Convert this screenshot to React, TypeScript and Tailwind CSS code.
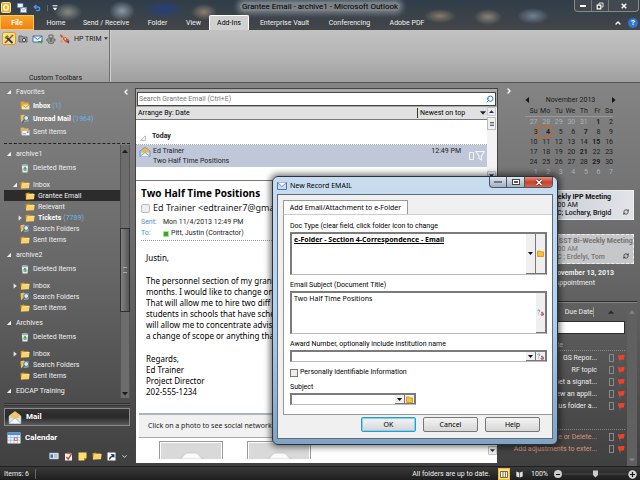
import { Check, ChevronDown, ChevronLeft, ChevronRight, ChevronUp, RefreshCw, Search, Undo2 } from "lucide-react";
import type { ReactNode } from "react";

type IconKind = "folder" | "inbox" | "search" | "sent" | "trash";

type FolderItem = {
  label: string;
  icon: IconKind;
  count?: string;
  bold?: boolean;
  nested?: boolean;
  selected?: boolean;
  arrow?: "open" | "closed";
};

type FolderGroup = {
  name: string;
  items: FolderItem[];
};

const ribbonTabs = [
  { label: "Home", width: "w-[38px]" },
  { label: "Send / Receive", width: "w-[62px]" },
  { label: "Folder", width: "w-[41px]" },
  { label: "View", width: "w-[31px]" },
  { label: "Add-Ins", width: "w-10", active: true },
  { label: "Enterprise Vault", width: "w-[71px]" },
  { label: "Conferencing", width: "w-[59px]" },
  { label: "Adobe PDF", width: "w-[56px]" },
];

const favorites: FolderItem[] = [
  { label: "Inbox", icon: "inbox", count: "(1)", bold: true },
  { label: "Unread Mail", icon: "search", count: "(1964)", bold: true },
  { label: "Sent Items", icon: "sent" },
];

const folderGroups: FolderGroup[] = [
  {
    name: "archive1",
    items: [
      { label: "Inbox", icon: "folder", arrow: "open" },
      { label: "Grantee Email", icon: "folder", nested: true, selected: true },
      { label: "Relevant", icon: "folder", nested: true },
      { label: "Tickets", icon: "folder", nested: true, count: "(7789)", bold: true, arrow: "closed" },
      { label: "Search Folders", icon: "search" },
      { label: "Sent Items", icon: "folder" },
    ],
  },
  {
    name: "archive2",
    items: [
      { label: "Inbox", icon: "folder", arrow: "closed" },
      { label: "Search Folders", icon: "search" },
      { label: "Sent Items", icon: "folder" },
    ],
  },
  {
    name: "Archives",
    items: [
      { label: "Inbox", icon: "folder", arrow: "closed" },
      { label: "Search Folders", icon: "search" },
      { label: "Sent Items", icon: "folder" },
    ],
  },
];

const bodyLines = [
  "The personnel section of my grant",
  "months. I would like to change one",
  "That will allow me to hire two diff",
  "students in schools that have sche",
  "will allow me to concentrate advis",
  "a change of scope or anything that",
];

const weekdays = ["Su", "Mo", "Tu", "We", "Th", "Fr", "Sa"];

const weeks = [
  [27, 28, 29, 30, 31, 1, 2],
  [3, 4, 5, 6, 7, 8, 9],
  [10, 11, 12, 13, 14, 15, 16],
  [17, 18, 19, 20, 21, 22, 23],
  [24, 25, 26, 27, 28, 29, 30],
  [1, 2, 3, 4, 5, 6, 7],
];

const busyDays = [1, 4, 7, 15, 21, 29];

const tasks = ["GS Repor...", "RF topic", "Get a signat...", "Review an appli...", "Status folder a..."];

const lateTasks = ["Move or Delete...", "Add adjustments to exter..."];

function FolderIcon() {
  return (
    <svg viewBox="0 0 10 8" className="h-2 w-2.5 shrink-0">
      <path d="M.5 1.2 4 .6l.8 1 3.7-.3v5.5L1 7.6z" fill="#d99a22" />
      <path d="M2 2.6 9.6 2 9 7.2.8 7.6z" fill="#fbd36b" />
      <path d="M2.2 3 9.2 2.5" stroke="#fff0b5" strokeWidth=".7" />
    </svg>
  );
}

function TreeIcon({ kind }: { kind: IconKind }) {
  if (kind === "trash") {
    return (
      <svg viewBox="0 0 10 10" className="h-2.5 w-2.5 shrink-0">
        <path d="M1.8 2.2h6.4L7.5 9.4h-5z" fill="#e4ebee" />
        <ellipse cx="5" cy="2.2" rx="3.2" ry="1.1" fill="#9fb0b8" />
        <path d="m5 4 1.5 2.2H3.5zM3.6 7.4h3" stroke="#2c9a4a" fill="#49b862" strokeWidth=".7" />
      </svg>
    );
  }
  if (kind === "search") {
    return (
      <svg viewBox="0 0 10 9" className="h-[9px] w-2.5 shrink-0">
        <path d="M.5 1.2 4 .6l.8 1 3.7-.3v6L1 8z" fill="#f2bd4b" />
        <circle cx="6.2" cy="4" r="2.4" fill="#d9efff" stroke="#3579c6" />
        <path d="m4.5 5.8-2.3 2.6" stroke="#2862a8" strokeWidth="1.3" />
      </svg>
    );
  }
  if (kind === "inbox") {
    return (
      <svg viewBox="0 0 10 9" className="h-[9px] w-2.5 shrink-0">
        <path d="M.5.8 4 .5l.8 1 3.7-.3v6L1 8z" fill="#e6a52e" />
        <path d="M2 3.6h7.4v4.8H2z" fill="#fbe3a0" />
        <path d="m2 3.6 3.7 2.8 3.7-2.8" fill="none" stroke="#b98623" strokeWidth=".7" />
      </svg>
    );
  }
  if (kind === "sent") {
    return (
      <svg viewBox="0 0 10 9" className="h-[9px] w-2.5 shrink-0">
        <path d="M.5.8 4 .5l.8 1 3.7-.3v6L1 8z" fill="#eab34a" />
        <path d="M2 3.4h7.6v5H2z" fill="#f1f6fc" stroke="#7f9cc0" strokeWidth=".5" />
        <path d="M6.8 4.4h1.8v1.5H6.8z" fill="#d2504a" />
        <path d="M3 6.7h3" stroke="#5b82b8" strokeWidth=".7" />
      </svg>
    );
  }
  return <FolderIcon />;
}

function Caret({ state }: { state?: "open" | "closed" }) {
  return (
    <svg viewBox="0 0 6 6" className="mr-0.5 h-1.5 w-1.5 shrink-0">
      {state === "open" && <path d="M5 .8V5H.8z" fill="#f1f1f1" />}
      {state === "closed" && <path d="M1.6.4 4.8 3 1.6 5.6z" fill="#e8e8e8" />}
    </svg>
  );
}

function FolderRow({ item, tall }: { item: FolderItem; tall?: boolean }) {
  return (
    <button
      type="button"
      className={`flex w-full items-center text-left ${tall ? "h-[13px]" : "h-[11px]"} ${
        item.nested ? "pl-[13px]" : "pl-2"
      } ${item.selected ? "bg-[#2d2c2d]" : ""}`}
    >
      <Caret state={item.arrow} />
      <TreeIcon kind={item.icon} />
      <span className={`ml-[3px] whitespace-nowrap ${item.bold ? "font-bold text-white" : ""}`}>{item.label}</span>
      {item.count && <span className="ml-0.5 text-[#6cb6ea]">{item.count}</span>}
    </button>
  );
}

function GroupHeader({ name }: { name: string }) {
  return (
    <button type="button" className="flex h-3.5 w-full items-center gap-0.5 pl-0.5 text-left">
      <Caret state="open" />
      {name}
    </button>
  );
}

function FolderPane() {
  return (
    <nav className="flex w-[130px] shrink-0 flex-col pb-0.5 pl-1 text-[#f0f0f0]">
      <div className="flex items-center justify-between pt-0.5">
        <GroupHeader name="Favorites" />
        <ChevronLeft className="h-2 w-2 shrink-0 text-white" strokeWidth={4} />
      </div>
      {favorites.map((item) => (
        <FolderRow key={item.label} item={item} tall />
      ))}
      <div className="mt-[5px] border-t border-dashed border-[#222]" />
      <div className="mt-px flex grow">
        <div className="min-w-0 grow pt-0.5">
          {folderGroups.map((group) => (
            <section key={group.name} className="mb-[3px]">
              <GroupHeader name={group.name} />
              <div className="mb-1 flex h-3.5 items-center">
                <FolderRow item={{ label: "Deleted Items", icon: "trash" }} />
              </div>
              {group.items.map((item) => (
                <FolderRow key={item.label} item={item} />
              ))}
            </section>
          ))}
          <GroupHeader name="EDCAP Training" />
        </div>
        <div className="flex w-2.5 shrink-0 flex-col items-center border-x border-[#555] bg-[#6c6c6c]">
          <svg viewBox="0 0 8 4" className="my-1 h-1 w-2">
            <path d="M1 4 4 .5 7 4z" fill="#1b1b1b" />
          </svg>
          <div className="mt-[71px] grid h-[84px] w-2.5 place-items-center border border-[#303030] bg-linear-to-r from-[#828282] to-[#565656]">
            <div className="h-1.5 w-1 border-y border-[#aaa]" />
          </div>
          <svg viewBox="0 0 8 4" className="mb-0.5 mt-auto h-1 w-2">
            <path d="M1 0 4 3.5 7 0z" fill="#1b1b1b" />
          </svg>
        </div>
      </div>

      <div className="mt-[5px] h-[3px] border-y border-[#303030] bg-[#606060]" />
      <button
        type="button"
        className="mt-0.5 flex h-[18px] items-center gap-1 border border-[#8a8a8a] bg-linear-to-b from-[#343434] via-[#292929] to-[#5b5b5b] pl-[3px] text-[8px] font-bold text-white"
      >
        <svg viewBox="0 0 14 13" className="h-[13px] w-3.5">
          <path d="m1 5 6-4.5L13 5v7.4H1z" fill="#dcebf8" stroke="#8fb0d2" strokeWidth=".6" />
          <path d="M2.6 3.4 7 .8l4.4 2.6v3.8H2.6z" fill="#f7c558" />
          <path d="m1 12.4 6-5.6 6 5.6" fill="#fff" stroke="#7fa3ca" strokeWidth=".7" />
        </svg>
        Mail
      </button>
      <button type="button" className="mt-0.5 flex h-5 items-center gap-1 pl-[3px] text-[8px] font-bold text-white">
        <svg viewBox="0 0 14 12" className="h-3 w-3.5">
          <path d="M.5.5h13v11H.5z" fill="#eef5fd" />
          <path d="M.5.5h13v2.6H.5z" fill="#4c8fdc" />
          <path d="M.5 5.5h13M.5 8.3h13M3.7 3v8.5M7 3v8.5M10.4 3v8.5" stroke="#92b8df" strokeWidth=".7" />
          <path d="M7.4 5.8h2.8v2.6H7.4z" fill="#fff" stroke="#e25a33" strokeWidth=".9" />
        </svg>
        Calendar
      </button>
      <div className="flex h-4 items-center justify-end gap-[5px] pr-0.5">
        <svg viewBox="0 0 10 8" className="h-2 w-2.5">
          <path d="M.5 1h9v6h-9z" fill="#e8f0fa" stroke="#8ab" strokeWidth=".6" />
          <path d="M1.5 2.4h2.6v3.4H1.5z" fill="#3570b4" />
          <path d="M5.3 3h3M5.3 5h3" stroke="#567" strokeWidth=".7" />
        </svg>
        <svg viewBox="0 0 9 9" className="h-[9px] w-[9px]">
          <path d="M1 1.5h7v7H1z" fill="#f2f2f2" />
          <path d="m2.4 5 1.8 2.2L7.6 1.6" fill="none" stroke="#c63b2c" strokeWidth="1.3" />
          <path d="M3 .5h3v1.6H3z" fill="#a0683c" />
        </svg>
        <svg viewBox="0 0 9 9" className="h-[9px] w-[9px]">
          <path d="M.5.5h8v5.6L6 8.5H.5z" fill="#ffdf6a" />
          <path d="M8.5 6.1H6v2.4z" fill="#b98f21" />
        </svg>
        <FolderIcon />
        <svg viewBox="0 0 9 9" className="h-[9px] w-[9px]">
          <path d="M.5.5h8v8h-8z" fill="#fff" />
          <path d="M2 7.6C2 5 3.2 4.2 5 4L3.8 2.2h3.6v3.6L6 4.9C4.4 5.2 3.4 6 3.2 7.6z" fill="#1c2f4d" />
        </svg>
        <ChevronDown className="h-[7px] w-[7px]" strokeWidth={3} />
      </div>
    </nav>
  );
}

function TitleBar() {
  return (
    <header className="bg-[#3f464d] bg-[radial-gradient(ellipse_14px_9px_at_68px_12px,#858b85,transparent),radial-gradient(ellipse_13px_10px_at_122px_11px,#8999a5,transparent),radial-gradient(ellipse_20px_9px_at_164px_9px,#253f80,transparent),radial-gradient(ellipse_13px_8px_at_204px_12px,#8d8071,transparent),radial-gradient(ellipse_16px_7px_at_440px_16px,#887a65,transparent),radial-gradient(ellipse_14px_8px_at_488px_17px,#878373,transparent),radial-gradient(ellipse_16px_8px_at_533px_16px,#6f8194,transparent),linear-gradient(#303d49,#444649)]">
      <div className="flex h-[15px] items-start">
        <div className="flex h-[15px] w-[200px] items-center gap-1.5 pl-px text-white">
          <svg viewBox="0 0 10 11" className="h-[11px] w-2.5">
            <rect x=".5" y=".5" width="9" height="10" rx="1" fill="#f3b223" stroke="#ffe597" />
            <ellipse cx="5" cy="5.5" rx="2.2" ry="2.6" fill="none" stroke="#fff" strokeWidth="1.4" />
          </svg>
          <button type="button" aria-label="Send/Receive All Folders">
            <svg viewBox="0 0 10 10" className="h-2.5 w-2.5">
              <path d="M.5.5H6v4H.5zM3.5 4.5h6v5h-6z" fill="#eff5fc" stroke="#6590c5" strokeWidth=".7" />
              <path d="m3.5 4.5 3 2.6 3-2.6" fill="none" stroke="#6590c5" strokeWidth=".7" />
            </svg>
          </button>
          <button type="button" aria-label="Undo">
            <Undo2 className="h-2 w-2 text-[#4f94ed]" strokeWidth={4} />
          </button>
          <button type="button" aria-label="Customize toolbar" className="border-l border-[#666] pl-1">
            <svg viewBox="0 0 6 6" className="h-1.5 w-1.5">
              <path d="M.5.8h5" stroke="#fff" />
              <path d="M.8 2.8h4.4L3 5.4z" fill="#fff" />
            </svg>
          </button>
        </div>
        <h1 className="grow text-center text-[8px] leading-[14px] text-black">
          <span className="rounded-full bg-white/35 px-0.5 shadow-[0_0_5px_3px_rgb(255_255_255/0.3)]">
            Grantee Email - archive1 - Microsoft Outlook
          </span>
        </h1>
        <div className="flex w-[200px] justify-end pr-px">
          <div className="flex h-3 divide-x divide-[#777] rounded-b-sm border border-t-0 border-[#888] bg-[#414850]">
            <button type="button" aria-label="Minimize" className="grid w-[17px] place-items-center">
              <span className="h-0.5 w-1.5 bg-white" />
            </button>
            <button type="button" aria-label="Restore" className="grid w-[17px] place-items-center">
              <svg viewBox="0 0 8 8" className="h-2 w-2">
                <path d="M3 3V1h4v4H5.4" fill="none" stroke="#ddd" />
                <path d="M1.2 3.2h3.6v3.6H1.2z" fill="none" stroke="#fff" strokeWidth="1.2" />
              </svg>
            </button>
            <button type="button" aria-label="Close" className="grid w-[29px] place-items-center">
              <svg viewBox="0 0 6 6" className="h-1.5 w-1.5">
                <path d="m.7.7 4.6 4.6m0-4.6L.7 5.3" stroke="#fff" strokeWidth="1.5" />
              </svg>
            </button>
          </div>
        </div>
      </div>
      <div className="flex h-[15px] items-stretch text-[#f0f0f0]">
        <button
          type="button"
          className="mr-[3px] w-[34px] border border-[#f8c45c] bg-linear-to-b from-[#f3a529] to-[#f57f11] font-bold text-white"
        >
          File
        </button>
        {ribbonTabs.map((tab) => (
          <button
            key={tab.label}
            type="button"
            className={`whitespace-nowrap ${tab.width} ${
              tab.active ? "rounded-t-xs border border-b-0 border-white bg-[#d0d0d0] text-black" : ""
            }`}
          >
            {tab.label}
          </button>
        ))}
        <div className="ml-auto flex items-center gap-1.5 pr-0.5">
          <ChevronUp className="h-2 w-2 text-white" strokeWidth={4} />
          <button type="button" aria-label="Help" className="grid h-2.5 w-2.5 place-items-center rounded-full bg-[#2f75d4] text-[8px] font-bold text-white">
            ?
          </button>
        </div>
      </div>
    </header>
  );
}

function Ribbon() {
  return (
    <div className="flex h-[53px] border-b border-[#555] bg-linear-to-b from-[#c2c2c2] via-[#b5b5b5] to-[#9f9f9f] text-[#1a1a1a]">
      <div className="flex w-[110px] flex-col justify-between border-r border-[#707070] pl-0.5 pt-0.5 shadow-[1px_0_0_#d0d0d0]">
        <div className="flex items-center gap-0.5">
          <button type="button" aria-label="Contacts tool" className="grid h-[13px] w-3.5 place-items-center rounded-xs border border-[#d99b2e] bg-[#ffdf83]">
            <svg viewBox="0 0 10 10" className="h-2.5 w-2.5">
              <path d="m1 9 8-8" stroke="#c33b2e" strokeWidth="1.6" />
              <path d="m2 3 6.5 6" stroke="#20366f" strokeWidth="1.8" />
              <path d="M.5 3.6 3.4 1 5 3 2 5z" fill="#2ea02e" />
            </svg>
          </button>
          <svg viewBox="0 0 10 10" className="h-2.5 w-2.5">
            <path d="M1 2h3l1 1h4v5H1z" fill="#999" stroke="#666" />
            <circle cx="6" cy="6" r="1.7" fill="#ccc" stroke="#555" />
          </svg>
          <svg viewBox="0 0 11 10" className="ml-0.5 h-2.5 w-[11px]">
            <path d="M1 2h9v6H1z" fill="#eef5ff" stroke="#3f70b6" />
            <path d="m1 2 4.5 3.5L10 2" fill="none" stroke="#3f70b6" />
            <path d="M6 7h3V5.4L11 7.7 9 10V8.6H6z" fill="#36a342" />
          </svg>
          <svg viewBox="0 0 10 10" className="ml-px h-2.5 w-2.5">
            <path d="M3 1h4v3H3zM1 5h8v2H1z" fill="#bbb" stroke="#666" />
            <path d="M5 4v4M2 8.5c1 1 5 1 6 0" fill="none" stroke="#555" />
          </svg>
          <svg viewBox="0 0 11 11" className="ml-px h-[11px] w-[11px]">
            <path d="m1 1 3 2-2 2z" fill="#d5452e" />
            <path d="m2.4 2.4 7 3.6.8 4-4-.8z" fill="#e8542f" />
            <path d="m4 3 5 2-3 3z" fill="#f6c33e" />
            <circle cx="6.2" cy="6" r="1.4" fill="#fff3c0" stroke="#a8321e" strokeWidth=".8" />
            <path d="m7.4 8.4 3-1.2-.4 3.4z" fill="#6f2fa0" />
            <path d="m1.4 7 2.4 1-2 2z" fill="#f48b24" />
          </svg>
          <button type="button" className="ml-0.5 flex items-center gap-0.5 whitespace-nowrap">
            HP TRIM
            <svg viewBox="0 0 4 3" className="h-[3px] w-1">
              <path d="M0 .3h4L2 2.8z" fill="#333" />
            </svg>
          </button>
        </div>
        <div className="text-center leading-[8px]">Custom Toolbars</div>
      </div>
    </div>
  );
}

function ScrollArrow({ up }: { up?: boolean }) {
  return (
    <svg viewBox="0 0 9 9" className="h-[9px] w-[9px] shrink-0">
      <path d="M.5.5h8v8h-8z" fill="#e9ebee" stroke="#c2c6cb" />
      {up ? <path d="M2 6 4.5 3.2 7 6z" fill="#243047" /> : <path d="M2 3.2 4.5 6 7 3.2z" fill="#243047" />}
    </svg>
  );
}

function Photo() {
  return (
    <div className="h-[18px] w-16 border border-b-0 border-[#999] bg-white px-px pt-px">
      <svg viewBox="0 0 60 16" preserveAspectRatio="xMidYMax slice" className="h-full w-full">
        <path d="M0 0h60v16H0z" fill="#d9d9d9" />
        <path d="M19 16c3-1 4-6 8-6h7c4 0 5 5 8 6z" fill="#fafafa" stroke="#bbb" strokeWidth=".6" />
      </svg>
    </div>
  );
}

function MailPane() {
  return (
    <main className="mx-[5px] mb-0.5 mt-[5px] flex min-w-0 grow flex-col border border-[#444] bg-white text-[#222]">
      <div className="bg-[#a9a9a9] p-px pt-[3px]">
        <div className="flex h-3.5 items-center border border-[#444] bg-white px-px">
          <input aria-label="Search Grantee Email" placeholder="Search Grantee Email (Ctrl+E)" className="min-w-0 grow outline-none placeholder:text-[#777]" />
          <Search className="h-2 w-2 -scale-x-100 text-[#2c74c9]" strokeWidth={3} />
        </div>
      </div>
      <div className="flex h-[73px]">
        <div className="min-w-0 grow">
          <div className="flex h-[13px] items-center justify-between border-b border-[#777] bg-[#e1e1e1] pl-0.5 text-black">
            <button type="button">Arrange By: Date</button>
            <button type="button" className="flex w-[70px] items-center justify-between border-l border-[#333] pl-0.5 pr-px">
              Newest on top
              <svg viewBox="0 0 6 4" className="h-1 w-1.5">
                <path d="M0 .3h6L3 3.8z" fill="#222" />
              </svg>
            </button>
          </div>
          <div className="flex h-[25px] items-end gap-1.5 border-b border-dotted border-[#aaa] pb-[3px] pl-1 font-bold leading-[9px]">
            <svg viewBox="0 0 6 6" className="h-1.5 w-1.5">
              <path d="M5.4.8v4.6H.8z" fill="none" stroke="#aaa" strokeWidth=".8" />
            </svg>
            Today
          </div>
          <button type="button" className="flex h-[22px] w-full items-start bg-[#c0c7d8] pl-[3px] pt-px text-left leading-2.5">
            <svg viewBox="0 0 12 10" className="mt-px h-2.5 w-3">
              <path d="m1 4 5-3.5L11 4v5.5H1z" fill="#cfe1f4" stroke="#4c83bf" strokeWidth=".8" />
              <path d="M2 3.4 6 1l4 2.4v2H2z" fill="#f3b640" />
              <path d="m1 9.5 5-4 5 4" fill="#e8f2fb" stroke="#4c83bf" strokeWidth=".6" />
            </svg>
            <span className="ml-0.5 grow">
              Ed Trainer
              <br />
              Two Half Time Positions
            </span>
            <span className="mr-2">12:49 PM</span>
            <svg viewBox="0 0 16 12" className="mr-0.5 mt-1 h-3 w-4">
              <path d="M.5 2.5h4v7h-4z" fill="none" stroke="#f3f3f3" />
              <path d="M7 1.5h8.5L12.5 6v4L10 8.5V6z" fill="none" stroke="#f3f3f3" strokeWidth="1.2" />
            </svg>
          </button>
        </div>
        <div className="flex w-2.5 flex-col bg-[#f3f3f3]">
          <ScrollArrow up />
          <div className="mt-px grid h-[13px] w-[9px] place-items-center border border-[#bbb] bg-[#eee]">
            <span className="h-1 w-1 border-y border-[#666] bg-[#bbb]" />
          </div>
          <div className="grow" />
          <ScrollArrow />
        </div>
      </div>

      <article className="border-t border-[#777] pl-[5px] pt-1.5">
        <h2 className="font-['Open_Sans',sans-serif] text-[10px] font-bold leading-3 text-black">Two Half Time Positions</h2>
        <div className="mt-[3px] flex h-3 items-center gap-[3px] whitespace-nowrap font-['Noto_Sans',sans-serif] text-[9px]">
          <span className="h-[9px] w-[9px] shrink-0 rounded-xs border border-[#bbb] bg-[#eee]" />
          <span>Ed Trainer &lt;edtrainer7@gmail</span>
        </div>
        <dl className="mb-px mt-[3px] grid grid-cols-[22px_1fr] text-[7px] leading-[11px]">
          <dt className="text-[#4a90c8]">Sent:</dt>
          <dd>Mon 11/4/2013 12:49 PM</dd>
          <dt className="text-[#4a90c8]">To:</dt>
          <dd className="flex items-center gap-0.5">
            <span className="h-1.5 w-1.5 border border-[#a5e39a] bg-[#2fae25]" />
            Pitt, Justin (Contractor)
          </dd>
        </dl>
      </article>
      <div className="mx-[5px] border-t border-dotted border-[#999]" />
      <div className="px-2.5 pt-[11px] font-['Noto_Sans',sans-serif] text-[8px] leading-[11px] text-black">
        <p>Justin,</p>
        <p className="mt-3 whitespace-nowrap">
          {bodyLines.map((line) => (
            <span key={line} className="block">
              {line}
            </span>
          ))}
        </p>
        <p className="mt-3">
          Regards,
          <br />
          Ed Trainer
          <br />
          Project Director
          <br />
          202-555-1234
        </p>
      </div>
      <div className="ml-[3px] mt-auto">
        <div className="h-[25px] border-b border-t-2 border-b-[#aaa] border-t-[#a9b4c3] bg-[#f1f1f1] pl-[9px] font-['Noto_Sans',sans-serif] leading-[22px]">
          Click on a photo to see social network updates
        </div>
        <div className="flex gap-6 pl-5 pt-[3px]">
          <Photo />
          <Photo />
          <div className="ml-auto self-center">
            <ScrollArrow />
          </div>
        </div>
        <div className="h-1" />
      </div>
    </main>
  );
}

function MonthCalendar() {
  return (
    <section className="ml-[22px] w-[91px] text-[#202020]">
      <div className="flex h-3 items-center justify-between">
        <button type="button" aria-label="Previous month">
          <svg viewBox="0 0 4 6" className="h-1.5 w-1">
            <path d="M4 0v6L.4 3z" fill="#151515" />
          </svg>
        </button>
        <span>November 2013</span>
        <button type="button" aria-label="Next month">
          <svg viewBox="0 0 4 6" className="h-1.5 w-1">
            <path d="M0 0v6l3.6-3z" fill="#151515" />
          </svg>
        </button>
      </div>
      <table className="w-[88px] table-fixed text-right leading-[10px]">
        <thead>
          <tr className="border-b border-[#999]">
            {weekdays.map((day) => (
              <th key={day} className="font-normal">
                {day}
              </th>
            ))}
          </tr>
        </thead>
        <tbody>
          {weeks.map((week, row) => (
            <tr key={row}>
              {week.map((day) => {
                const outside = (row === 0 && day > 20) || row === 5;
                const today = row === 1 && day === 4;
                return (
                  <td
                    key={day}
                    className={outside ? "text-[#a9b3bd]" : busyDays.includes(day) ? "font-bold" : ""}
                  >
                    <span className={`block ${today ? "ring-1 ring-[#d3661b]" : ""}`}>{day}</span>
                  </td>
                );
              })}
            </tr>
          ))}
        </tbody>
      </table>
    </section>
  );
}

function Appointment({ title, time, who, tentative }: { title: string; time: string; who: string; tentative?: boolean }) {
  return (
    <div
      className={`mr-1.5 flex h-[30px] border pl-11 pt-0.5 leading-[8px] whitespace-nowrap ${
        tentative ? "border-dashed border-[#eee] bg-[#c5c7cb] text-[#77736e]" : "border-[#eee] bg-linear-to-r from-[#bfc3ca] to-[#e2e4e9] text-[#111]"
      }`}
    >
      <div className="w-[66px] grow">
        <div className="font-bold">{title}</div>
        <div>{time}</div>
        <div className="font-medium">{who}</div>
      </div>
      <RefreshCw className="mb-1 mr-1 h-1.5 w-1.5 self-end text-[#333]" strokeWidth={3} />
    </div>
  );
}

function Flag() {
  return (
    <svg viewBox="0 0 8 9" className="h-[9px] w-2 shrink-0">
      <path d="M1.2.8 3.4 8.6" stroke="#4560a8" strokeWidth="1.1" />
      <path d="M.8 1c2 1.4 3.4-1 6.9.6L6.6 5.8c-1.8-.9-2.8.8-4.5.2z" fill="#f4401f" />
    </svg>
  );
}

function TaskRow({ label, late }: { label: string; late?: boolean }) {
  return (
    <li className={`flex h-3 items-center ${late ? "text-[#d79578]" : "text-[#eee]"}`}>
      <span className="w-[94px] whitespace-nowrap text-right">{label}</span>
      <span className="ml-auto mr-[3px] h-2 w-[5px] border border-[#888]" />
      <Flag />
    </li>
  );
}

function TodoBar() {
  return (
    <aside className="flex w-[137px] shrink-0 flex-col text-[#eee]">
      <div className="flex h-[11px] items-center pl-0.5 pt-[5px]">
        <ChevronRight className="h-2 w-2 text-white" strokeWidth={4} />
      </div>
      <MonthCalendar />
      <div className="mt-[13px]">
        <Appointment title="Weekly IPP Meeting" time="10:00 AM" who="PCC; Lochary, Brigid" />
      </div>
      <div className="mt-3.5">
        <Appointment title="GS SST Bi-Weekly Meeting" time="11:00 AM" who="PCC ; Erdelyi, Tom" tentative />
      </div>
      <div className="mt-1 w-[111px] text-right font-bold leading-[11px]">November 13, 2013</div>
      <div className="w-[92px] text-right leading-[9px]">Appointment</div>
      <div className="mr-[3px] mt-[13px] border-t border-[#2d2d2d] shadow-[0_1px_0_#858585]" />
      <div className="flex grow pt-1">
        <div className="w-[122px]">
          <div className="flex h-3 items-center">
            <span className="w-[91px] border-r border-[#999] text-right">Due Date</span>
            <svg viewBox="0 0 6 4" className="ml-3.5 h-1 w-1.5">
              <path d="M0 3.7h6L3 .3z" fill="#2b2b2b" />
            </svg>
          </div>
          <input aria-label="Type a new task" className="mt-[3px] block h-[13px] w-full border border-[#2d2d2d] bg-white text-black outline-none" />
          <div className="mt-1.5 w-[60px] text-right leading-[10px] text-[#bbb]">No Date</div>
          <ul className="border-t border-dotted border-[#888] pt-px">
            {tasks.map((task) => (
              <TaskRow key={task} label={task} />
            ))}
          </ul>
          <ul className="mt-[17px] border-t border-dotted border-[#888] pt-px">
            {lateTasks.map((task) => (
              <TaskRow key={task} label={task} late />
            ))}
          </ul>
        </div>
        <div className="ml-0.5 flex w-2.5 flex-col items-center justify-between bg-[#606060] py-1">
          <svg viewBox="0 0 6 4" className="h-1 w-1.5">
            <path d="M0 3.7h6L3 .3z" fill="#838383" />
          </svg>
          <svg viewBox="0 0 6 4" className="h-1 w-1.5">
            <path d="M0 .3h6L3 3.7z" fill="#838383" />
          </svg>
        </div>
      </div>
    </aside>
  );
}

function StatusBar() {
  return (
    <footer className="flex h-[17px] items-center border-b-2 border-t border-b-[#8b8f96] border-t-[#1f1f1f] bg-linear-to-b from-[#3a3a3a] to-[#1c1c1c] pl-1 text-[#eee]">
      <span className="border-r border-[#666] pr-1.5">Items: 6</span>
      <span className="ml-auto mr-2">All folders are up to date.</span>
      <button type="button" aria-label="Normal view" className="mr-1.5 grid h-3 w-3 place-items-center border border-[#f3b83c] bg-[#ffe28f]">
        <svg viewBox="0 0 8 7" className="h-[7px] w-2">
          <path d="M.5.5h7v6h-7zM3 .5v6M5.4.5v6" fill="#fff" stroke="#6d5b32" strokeWidth=".9" />
        </svg>
      </button>
      <button type="button" aria-label="Reading view">
        <svg viewBox="0 0 7 7" className="h-[7px] w-[7px]">
          <path d="M.3.5 3.2 1.6v5L.3 5.5zM6.7.5 3.8 1.6v5l2.9-1.1z" fill="#ddd" />
        </svg>
      </button>
      <span className="ml-2">100%</span>
      <button type="button" aria-label="Zoom out" className="ml-1.5 grid h-2 w-2 place-items-center rounded-full bg-[#ccc]">
        <span className="h-px w-1 bg-[#111]" />
      </button>
      <div className="mx-px grid w-16 place-items-center">
        <svg viewBox="0 0 64 8" className="h-2 w-full">
          <path d="M0 4h64" stroke="#4b4b4b" />
          <path d="M30 .5h5v4.6L32.5 7.6 30 5.1z" fill="#ccc" />
        </svg>
      </div>
      <button type="button" aria-label="Zoom in" className="mr-[3px]">
        <svg viewBox="0 0 9 9" className="h-[9px] w-[9px]">
          <circle cx="4.5" cy="4.5" r="4.2" fill="#d5d5d5" />
          <path d="M2 4.5h5M4.5 2v5" stroke="#111" strokeWidth="1.2" />
        </svg>
      </button>
    </footer>
  );
}

function FieldButton({ label, children }: { label: string; children: ReactNode }) {
  return (
    <button type="button" aria-label={label} className="grid w-2.5 shrink-0 place-items-center border-b border-r border-[#777] bg-[#efefef]">
      {children}
    </button>
  );
}

function DropArrow() {
  return (
    <svg viewBox="0 0 5 3" className="h-[3px] w-[5px]">
      <path d="M0 0h5L2.5 3z" fill="#111" />
    </svg>
  );
}

function PickFolder() {
  return (
    <svg viewBox="0 0 7 7" className="h-[7px] w-[7px]">
      <path d="M.5 1h2.6l.8.9h2.6v4.6h-6z" fill="#fbc12d" stroke="#c88412" strokeWidth=".7" />
    </svg>
  );
}

function Lookup() {
  return (
    <svg viewBox="0 0 7 7" className="h-[7px] w-[7px]">
      <path d="M.6 1.8c.6-1.4 2.6-1 2 .4L1.7 3.4M1.7 4.6v.8" fill="none" stroke="#2b9aae" strokeWidth=".9" />
      <path d="M4 3.6c1-.7 2.2-.3 2.2.6v2.2M6.2 4.9c-1.6-.2-2.4.2-2.2 1 .3.8 1.7.6 2.2-.3" fill="none" stroke="#b6224c" strokeWidth=".9" />
    </svg>
  );
}

function RecordDialog() {
  const field = "flex border-l-2 border-t-2 border-b border-r border-[#7b7b7b] border-b-[#bbb] border-r-[#777] bg-white";
  const action = "h-[15px] w-[55px] rounded-xs border bg-linear-to-b from-[#f4f4f4] to-[#d6d6d6]";

  return (
    <section
      role="dialog"
      aria-label="New Record EMAIL"
      className="absolute left-[272px] top-[176px] w-[286px] rounded-md border border-[#26323f] bg-linear-to-b from-[#c9dcef] via-[#b5d2ec] to-[#7fa3c2] px-1 pb-[5px] font-['Noto_Sans',sans-serif] text-[7px] text-black shadow-[0_0_6px_2px_rgb(0_0_0/0.55)]"
    >
      <div className="flex h-[17px] items-start">
        <svg viewBox="0 0 10 8" className="mt-[5px] h-2 w-2.5">
          <path d="M.5.5h9v7h-9z" fill="#c9daf0" stroke="#5577a8" />
          <path d="m.5.5 4.5 4 4.5-4" fill="#fff" stroke="#5577a8" strokeWidth=".8" />
        </svg>
        <span className="ml-[3px] grow leading-[17px]">New Record EMAIL</span>
        <div className="flex h-[11px] divide-x divide-[#555] overflow-hidden rounded-b-sm border border-t-0 border-[#4b5563] bg-linear-to-b from-[#dfe7ef] to-[#9fb1c4]">
          <button type="button" aria-label="Minimize" className="grid w-[17px] place-items-center">
            <span className="h-0.5 w-2 border border-[#777] bg-white" />
          </button>
          <button type="button" aria-label="Maximize" className="grid w-[18px] place-items-center">
            <span className="h-1.5 w-2 border border-[#444] bg-white p-px">
              <span className="block h-0.5 border border-[#555]" />
            </span>
          </button>
          <button type="button" aria-label="Close" className="grid w-[27px] place-items-center bg-linear-to-b from-[#e2907d] via-[#c8402a] to-[#d2664a]">
            <svg viewBox="0 0 8 7" className="h-[7px] w-2">
              <path d="m1.5 1 5 5m0-5-5 5" stroke="#4a2320" strokeWidth="2.6" />
              <path d="m1.5 1 5 5m0-5-5 5" stroke="#fff" strokeWidth="1.5" />
            </svg>
          </button>
        </div>
      </div>

      <form className="border border-[#5d6b7a] bg-[#f0f0f0] pl-[5px] pt-[5px]" onSubmit={(event) => event.preventDefault()}>
        <button type="button" className="block h-3.5 w-[125px] border border-b-0 border-[#999] bg-white leading-[13px]">
          Add Email/Attachment to e-Folder
        </button>
        <div className="border border-r-0 border-[#999] border-t-[#ccc] bg-white pb-[9px] pl-1.5 pr-[5px] pt-[7px] font-[Roboto,sans-serif] leading-[9px]">
          <label htmlFor="doc-type" className="block">
            Doc Type (clear field, click folder icon to change
          </label>
          <div className={`${field} mt-px h-[43px]`}>
            <textarea
              id="doc-type"
              defaultValue="e-Folder - Section 4-Correspondence - Email"
              className="min-w-0 grow resize-none overflow-hidden pl-0.5 pt-px font-['Noto_Sans',sans-serif] text-[7px] font-bold leading-[9px] underline outline-none"
            />
            <FieldButton label="Show document types">
              <DropArrow />
            </FieldButton>
            <FieldButton label="Choose folder">
              <PickFolder />
            </FieldButton>
          </div>
          <label htmlFor="email-subject" className="mt-1.5 block">
            Email Subject (Document Title)
          </label>
          <div className={`${field} mt-px h-[43px]`}>
            <textarea
              id="email-subject"
              defaultValue="Two Half Time Positions"
              className="min-w-0 grow resize-none overflow-hidden pl-0.5 pt-px font-['Noto_Sans',sans-serif] text-[7px] leading-[9px] outline-none"
            />
            <FieldButton label="Check subject">
              <Lookup />
            </FieldButton>
          </div>
          <label htmlFor="award" className="mt-1.5 block">
            Award Number, optionally include institution name
          </label>
          <div className={`${field} mt-px h-3`}>
            <input id="award" className="min-w-0 grow outline-none" />
            <FieldButton label="Show awards">
              <DropArrow />
            </FieldButton>
            <FieldButton label="Look up award">
              <Lookup />
            </FieldButton>
          </div>
          <label className="mt-1.5 flex items-center gap-0.5">
            <span className="grid h-2 w-2">
              <input type="checkbox" className="peer col-start-1 row-start-1 h-2 w-2 appearance-none border border-[#777] bg-[#eee]" />
              <Check className="pointer-events-none col-start-1 row-start-1 hidden h-2 w-2 peer-checked:block" strokeWidth={4} />
            </span>
            Personally Identifiable Information
          </label>
          <label htmlFor="subject" className="mt-1.5 block">
            Subject
          </label>
          <div className={`${field} mt-px h-3 w-[126px]`}>
            <input id="subject" className="min-w-0 grow outline-none" />
            <FieldButton label="Show subjects">
              <DropArrow />
            </FieldButton>
            <FieldButton label="Choose subject">
              <PickFolder />
            </FieldButton>
          </div>
        </div>
        <div className="flex h-[23px] justify-end gap-[7px] pr-3 pt-0.5">
          <button type="submit" className={`${action} border-[#2f9bc9] shadow-[inset_0_0_0_1px_#7fd3f2]`}>
            OK
          </button>
          <button type="button" className={`${action} border-[#777]`}>
            Cancel
          </button>
          <button type="button" className={`${action} border-[#777]`}>
            Help
          </button>
        </div>
      </form>
    </section>
  );
}

export default function App() {
  return (
    <div className="relative flex min-h-screen flex-col bg-[#555] font-[Roboto,'Noto_Sans',sans-serif] text-[7px] leading-[10px]">
      <TitleBar />
      <Ribbon />
      <div className="flex grow bg-linear-to-b from-[#848484] via-[#666] to-[#404040]">
        <FolderPane />
        <MailPane />
        <TodoBar />
      </div>
      <StatusBar />
      <RecordDialog />
    </div>
  );
}
